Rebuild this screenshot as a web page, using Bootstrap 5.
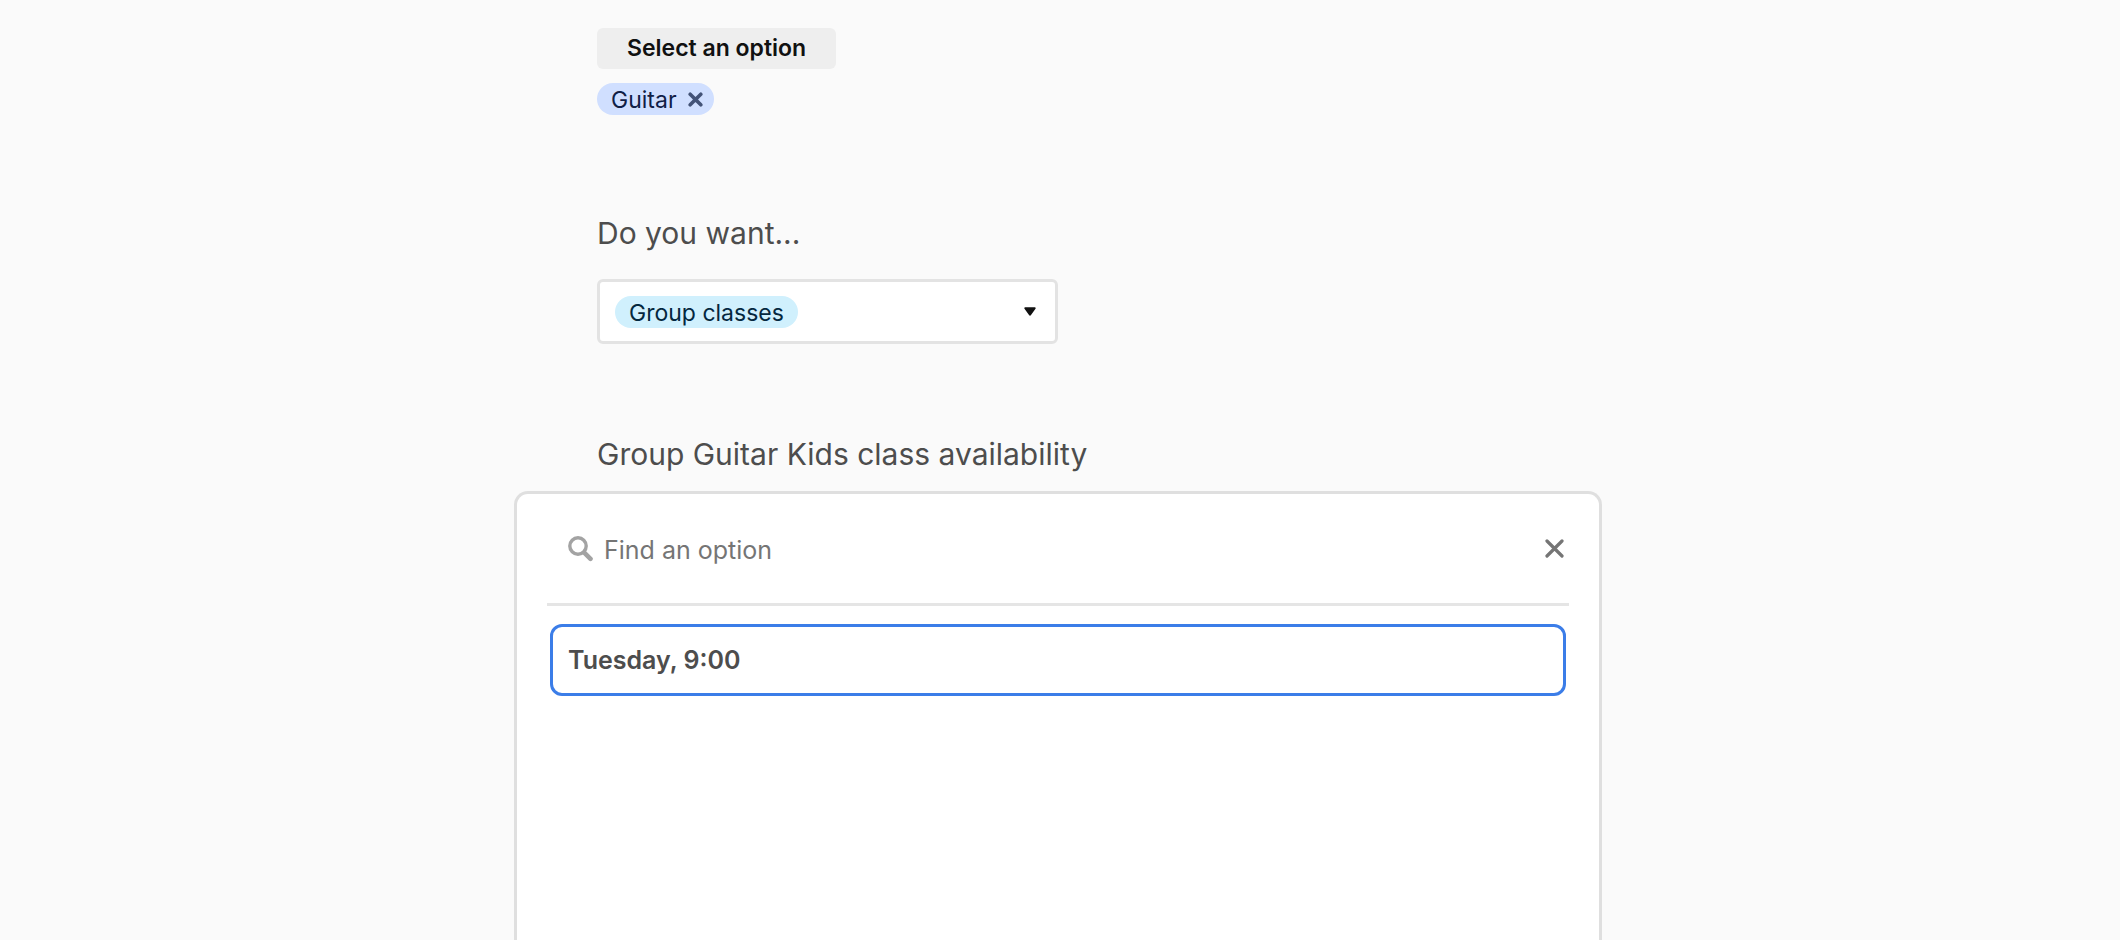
<!DOCTYPE html>
<html lang="en">
<head>
<meta charset="utf-8">
<meta name="viewport" content="width=device-width, initial-scale=1">
<title>Class registration</title>
<link href="https://cdn.jsdelivr.net/npm/bootstrap@5.3.0/dist/css/bootstrap.min.css" rel="stylesheet">
<style>
  body { background: #fafafa; color: #4d4d4d; font-family: Inter, "Liberation Sans", sans-serif; }
  .form-page { max-width: 1088px; padding-top: 28px; }
  .field { padding: 0 83px; }
  .field-title { font-size: 30px; line-height: 42px; font-weight: 400; }
  .add-btn { background: #eee; color: #111; font-size: 23px; line-height: 41px; font-weight: 600; padding: 0 30px; margin-bottom: 14px; border: 0; border-radius: 6px; }
  .token { font-size: 23px; line-height: 30px; height: 32px; padding: 2px 14px 0; border-radius: 16px; }
  .token-blue { background: #d0dfff; color: #102046; padding-right: 11px; gap: 11px; }
  .token-cyan { background: #d0f0fd; color: #04283f; }
  .icon-btn { background: none; border: 0; padding: 0; line-height: 0; }
  .token .icon-btn { padding-bottom: 2px; }
  .choice { width: 461px; max-width: 100%; height: 65px; margin-top: 25px; background: #fff; border: 3px solid #e3e3e3; border-radius: 6px; padding: 0 19px 0 15px; }
  .gap-block { margin-top: 97px; }
  .gap-next { margin-top: 89px; }
  .picker { background: #fff; border: 3px solid #dfdfdf; border-bottom: 0; border-radius: 14px 14px 0 0; padding: 0 30px; margin-top: 16px; }
  .search-row { height: 112px; border-bottom: 3px solid #e5e5e5; padding: 0 5px 0 21px; gap: 11px; }
  .search-input { border: 0; outline: 0; background: none; font-size: 25px; line-height: 32px; padding: 2px 0 0; color: #4d4d4d; }
  .search-input::placeholder { color: #757575; opacity: 1; }
  .option-btn { height: 72px; margin: 18px 3px 0; padding: 2px 15px 0; background: #fff; border: 3px solid #3b7de8; border-radius: 12px; color: #4d4d4d; font-size: 25px; font-weight: 600; }
</style>
</head>
<body class="pe-1">
<main class="form-page container-fluid px-0 min-vh-100 d-flex flex-column">
  <section class="field">
    <button type="button" class="add-btn d-block">Select an option</button>
    <div class="token token-blue d-inline-flex align-items-center">
      <span>Guitar</span>
      <button type="button" class="icon-btn" aria-label="Remove Guitar">
        <svg width="15" height="15" viewBox="0 0 15 15" fill="none" stroke="#435377" stroke-width="3.6" stroke-linecap="round"><path d="M2.2 2.2l10.6 10.6M12.8 2.2L2.2 12.8"/></svg>
      </button>
    </div>
  </section>

  <section class="field gap-block">
    <h2 class="field-title mb-0" id="format-label">Do you want...</h2>
    <button type="button" class="choice d-flex align-items-center justify-content-between" aria-labelledby="format-label format-value">
      <span class="token token-cyan" id="format-value">Group classes</span>
      <svg width="12" height="9" viewBox="0 0 12 9" fill="#111"><path d="M1.2.3h9.6c.8 0 1.2.9.7 1.5L7 8.1c-.5.7-1.5.7-2 0L.5 1.8C0 1.2.4.3 1.2.3z"/></svg>
    </button>
  </section>

  <section class="field gap-next">
    <h2 class="field-title mb-0">Group Guitar Kids class availability</h2>
  </section>

  <section class="picker flex-grow-1">
    <div class="search-row d-flex align-items-center">
      <svg class="flex-shrink-0" width="25" height="26" viewBox="0 0 25 26" fill="none" stroke="#a3a3a3" stroke-linecap="round"><circle cx="10" cy="10" r="8.2" stroke-width="3.4"/><path d="M16.5 16.8l6 6" stroke-width="4.6"/></svg>
      <input type="text" class="search-input flex-grow-1" placeholder="Find an option" aria-label="Find an option">
      <button type="button" class="icon-btn" aria-label="Close">
        <svg width="19" height="19" viewBox="0 0 19 19" fill="none" stroke="#757575" stroke-width="3.2" stroke-linecap="round"><path d="M2 2l15 15M17 2L2 17"/></svg>
      </button>
    </div>
    <div class="d-flex">
      <button type="button" class="option-btn flex-grow-1 text-start">Tuesday, 9:00</button>
    </div>
  </section>
</main>
<script src="https://cdn.jsdelivr.net/npm/bootstrap@5.3.0/dist/js/bootstrap.bundle.min.js"></script>
</body>
</html>
